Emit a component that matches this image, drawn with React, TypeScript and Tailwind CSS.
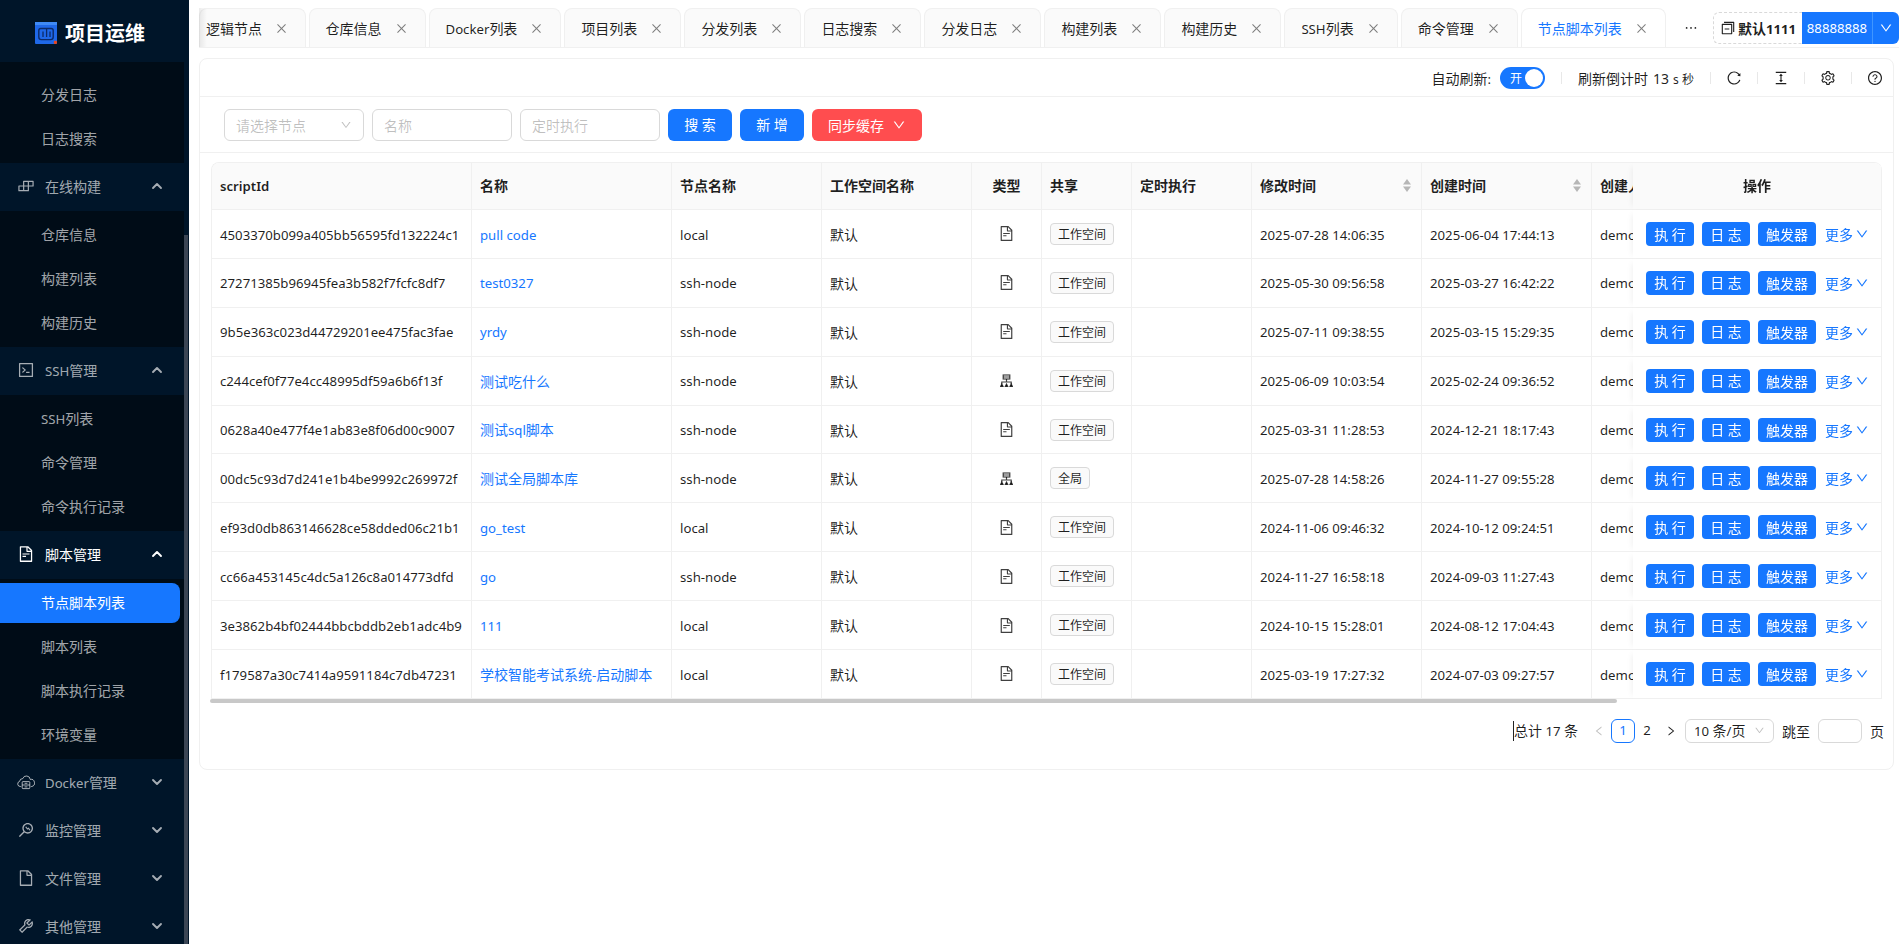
import React from "react";
import {
  AiOutlineBuild, AiOutlineCode, AiOutlineFileText, AiOutlineFile, AiOutlineTool, AiOutlineMonitor,
  AiOutlineClose, AiOutlineEllipsis, AiOutlineSwitcher, AiOutlineDown, AiOutlineReload, AiOutlineColumnHeight,
  AiOutlineSetting, AiOutlineQuestionCircle, AiOutlineLeft, AiOutlineRight,
} from "react-icons/ai";
import { ChevronDown, ChevronUp } from "lucide-react";

/* Latin runs are set in Noto Sans 13.2px, CJK runs stay at the surrounding size */
const M = ({ t }: { t: string }) => (
  <>
    {t.split(/([\x00-\x7f]+)/).filter(Boolean).map((p, i) =>
      /^[\x00-\x7f]+$/.test(p)
        ? <span key={i} className="font-['Noto_Sans'] text-[13.2px] whitespace-pre">{p}</span>
        : <span key={i}>{p}</span>
    )}
  </>
);

const DockerIcon = () => (
  <svg viewBox="0 0 18 16" className="w-[18px] h-[16px]" fill="none" stroke="currentColor" strokeWidth="1">
    <path d="M4.2 12.5H3.4A2.6 2.6 0 0 1 2.6 7.4 3.2 3.2 0 0 1 5.8 4.6 3.8 3.8 0 0 1 13.2 5.4 3.6 3.6 0 0 1 14.6 12.5H13.8" />
    <rect x="5.2" y="7.6" width="7.6" height="7" rx="0.8" />
    <path d="M5.2 11h7.6M7.6 9.3h2.8M7.6 12.9h2.8" />
  </svg>
);

const ClusterIcon = () => (
  <svg viewBox="0 0 13 13" className="w-[13px] h-[13px]" fill="none" stroke="currentColor" strokeWidth="1.2">
    <rect x="3.2" y="1" width="6.6" height="4" />
    <path d="M3.2 3h6.6M6.5 5v3M1.8 10V8h9.4v2" />
    <path d="M0.6 12.4l1.2-2.4 1.2 2.4zM5.3 12.4l1.2-2.4 1.2 2.4zM10 12.4l1.2-2.4 1.2 2.4z" fill="currentColor" />
  </svg>
);

const SortIcon = () => (
  <svg viewBox="0 0 8 13" className="w-[8px] h-[13px]" fill="rgba(0,0,0,0.27)">
    <path d="M4 0L8 5.5H0zM4 13L0 7.5H8z" />
  </svg>
);

const Logo = () => (
  <svg viewBox="0 0 22 22" className="w-[22px] h-[22px]">
    <rect x="0" y="0" width="22" height="22" rx="1" fill="#1f68e8" />
    <rect x="0" y="0" width="22" height="3" fill="#3f8af5" />
    <path d="M3.8 15V8.5a2 2 0 0 1 2-2h10.4a2 2 0 0 1 2 2V15a2.6 2.6 0 0 1-2.6 2.6H6.4A2.6 2.6 0 0 1 3.8 15z" fill="none" stroke="#0c2a68" strokeWidth="1.4" />
    <path d="M8 15V9.5M11.6 15V7M15 15V9.5" fill="none" stroke="#0c2a68" strokeWidth="1.3" />
    <rect x="18.8" y="18.8" width="3.2" height="3.2" rx="1.2" fill="#e8471f" />
  </svg>
);

const SubItem = ({ label, active }: { label: string; active?: boolean }) => (
  <div className={active
    ? "h-10 w-[180px] flex items-center pl-[41px] pb-[2px] rounded-r-lg bg-[#1677ff] text-white"
    : "h-10 flex items-center pl-[41px] pb-[2px] text-[rgba(255,255,255,0.65)]"}>
    <span><M t={label} /></span>
  </div>
);

const Group = ({ icon, label, open, active }: { icon: React.ReactNode; label: string; open?: boolean; active?: boolean }) => (
  <div className={active
    ? "h-12 shrink-0 flex items-center pl-[17px] pr-[19px] pb-[2px] text-white"
    : "h-12 shrink-0 flex items-center pl-[17px] pr-[19px] pb-[2px] text-[rgba(255,255,255,0.65)]"}>
    <span className="w-[18px] flex justify-center text-[20px]">{icon}</span>
    <span className="ml-[10px] flex-1"><M t={label} /></span>
    {open ? <ChevronUp size={16} strokeWidth={2.8} /> : <ChevronDown size={16} strokeWidth={2.8} />}
  </div>
);

const Sub = ({ first, children }: { first?: boolean; children: React.ReactNode }) => (
  <div className={first ? "bg-[#000c17] pt-[13px] pb-1 flex flex-col gap-1" : "bg-[#000c17] py-1 flex flex-col gap-1"}>{children}</div>
);

const Sidebar = () => (
  <aside className="w-[189px] shrink-0 h-screen bg-[#001529] flex flex-col overflow-hidden text-sm">
    <div className="h-[62px] shrink-0 flex items-center pl-[35px] pt-[4px]">
      <Logo />
      <span className="ml-[8px] text-[20px] font-bold text-white">项目运维</span>
    </div>
    <div className="flex-1 flex min-h-0">
      <div className="w-[184px] overflow-hidden">
        <Sub first><SubItem label="分发日志" /><SubItem label="日志搜索" /></Sub>
        <Group icon={<AiOutlineBuild />} label="在线构建" open />
        <Sub><SubItem label="仓库信息" /><SubItem label="构建列表" /><SubItem label="构建历史" /></Sub>
        <Group icon={<AiOutlineCode />} label="SSH管理" open />
        <Sub><SubItem label="SSH列表" /><SubItem label="命令管理" /><SubItem label="命令执行记录" /></Sub>
        <Group icon={<AiOutlineFileText />} label="脚本管理" open active />
        <Sub><SubItem label="节点脚本列表" active /><SubItem label="脚本列表" /><SubItem label="脚本执行记录" /><SubItem label="环境变量" /></Sub>
        <Group icon={<DockerIcon />} label="Docker管理" />
        <Group icon={<AiOutlineMonitor />} label="监控管理" />
        <Group icon={<AiOutlineFile />} label="文件管理" />
        <Group icon={<AiOutlineTool />} label="其他管理" />
      </div>
      <div className="w-[5px] pt-[173px]"><div className="w-[4px] h-full bg-[#3b4554]" /></div>
    </div>
  </aside>
);

const Tab = ({ label, active, first }: { label: string; active?: boolean; first?: boolean }) => (
  <div className={
    (active
      ? "h-10 shrink-0 flex items-center rounded-t-lg border border-[#f0f0f0] border-b-white bg-white text-[#1677ff] mr-[3px]"
      : "h-10 shrink-0 flex items-center rounded-t-lg border border-[#f0f0f0] border-b-[#e4e4e4] bg-[#fafafa] text-[rgba(0,0,0,0.88)] mr-[3px]") +
    (first ? " pl-[6px] pr-[16.5px]" : " pl-[16px] pr-[17px]")}>
    <span><M t={label} /></span>
    <AiOutlineClose className="ml-[13px] text-[13px] text-[rgba(0,0,0,0.5)]" />
  </div>
);

const TabBar = () => (
  <div className="mt-2 ml-[10px] mr-[3px] flex h-10 border-b border-[#f0f0f0] shrink-0">
    <div className="relative w-[1470px] flex overflow-hidden shrink-0">
      <Tab first label="逻辑节点" />
      {["仓库信息", "Docker列表", "项目列表", "分发列表", "日志搜索", "分发日志", "构建列表", "构建历史", "SSH列表", "命令管理"].map((t) => <Tab key={t} label={t} />)}
      <Tab active label="节点脚本列表" />
      <div className="absolute left-0 top-0 bottom-0 w-[8px] bg-gradient-to-r from-[rgba(0,0,0,0.08)] to-transparent" />
    </div>
    <div className="w-[44px] h-[39px] flex items-center justify-center"><AiOutlineEllipsis className="text-[16px] text-[rgba(0,0,0,0.88)]" /></div>
    <div className="mt-[4px] h-8 flex">
      <div className="w-[89px] flex items-center justify-center border border-dashed border-[#d9d9d9] border-r-0 rounded-l-md font-bold text-[rgba(0,0,0,0.88)]">
        <AiOutlineSwitcher className="text-[16px] mr-[2px]" /><span><M t="默认1111" /></span>
      </div>
      <div className="w-[71px] flex items-center justify-center bg-[#1677ff] text-white border-r border-[#4096ff]"><M t="88888888" /></div>
      <div className="w-[26px] flex items-center justify-center bg-[#1677ff] text-white rounded-r-md"><AiOutlineDown className="text-[14px]" /></div>
    </div>
  </div>
);

const Sep = () => <span className="block w-px h-[12px] bg-[#e8e8e8]" />;

const Toolbar = () => (
  <div className="h-[38px] shrink-0 border-b border-[#f0f0f0] flex items-center justify-end pr-[10px] pt-px text-[rgba(0,0,0,0.88)]">
    <span><M t="自动刷新:" /></span>
    <span className="ml-[9px] w-[45px] h-[22px] rounded-full bg-[#1677ff] flex items-center justify-between pl-[10px] pr-[2px] text-white text-xs">
      开<span className="w-[18px] h-[18px] rounded-full bg-white" />
    </span>
    <span className="ml-[16px]"><Sep /></span>
    <span className="ml-[16px] flex items-baseline">
      <span>刷新倒计时</span>
      <span className="ml-[5px] font-['Noto_Sans'] text-[14px]">13</span>
      <span className="ml-[4px] text-xs"><span className="font-['Noto_Sans'] text-xs whitespace-pre">s </span>秒</span>
    </span>
    <span className="ml-[16px]"><Sep /></span>
    <AiOutlineReload className="ml-[15px] text-[16px]" />
    <span className="ml-[15px]"><Sep /></span>
    <AiOutlineColumnHeight className="ml-[15px] text-[16px]" />
    <span className="ml-[15px]"><Sep /></span>
    <AiOutlineSetting className="ml-[15px] text-[16px]" />
    <span className="ml-[15px]"><Sep /></span>
    <AiOutlineQuestionCircle className="ml-[15px] text-[16px]" />
  </div>
);

const inputCls = "w-[140px] h-8 rounded-md border border-[#d9d9d9] bg-white flex items-center px-[11px] text-[rgba(0,0,0,0.25)]";

const Filters = () => (
  <div className="h-[56px] shrink-0 border-b border-[#f0f0f0] flex items-center pl-[24px]">
    <div className={inputCls + " justify-between"}>请选择节点<AiOutlineDown className="text-[12px]" /></div>
    <div className={inputCls + " ml-2"}>名称</div>
    <div className={inputCls + " ml-2"}>定时执行</div>
    <div className="ml-2 w-16 h-8 rounded-md bg-[#1677ff] text-white flex items-center justify-center"><span><M t="搜 索" /></span></div>
    <div className="ml-2 w-16 h-8 rounded-md bg-[#1677ff] text-white flex items-center justify-center"><span><M t="新 增" /></span></div>
    <div className="ml-2 w-[110px] h-8 rounded-md bg-[#ff4d4f] text-white flex items-center justify-center">同步缓存<AiOutlineDown className="text-[14px] ml-[8px]" /></div>
  </div>
);

type Row = { id: string; name: string; node: string; cluster?: boolean; global?: boolean; mod: string; created: string };
const rows: Row[] = [
  { id: "4503370b099a405bb56595fd132224c1", name: "pull code", node: "local", mod: "2025-07-28 14:06:35", created: "2025-06-04 17:44:13" },
  { id: "27271385b96945fea3b582f7fcfc8df7", name: "test0327", node: "ssh-node", mod: "2025-05-30 09:56:58", created: "2025-03-27 16:42:22" },
  { id: "9b5e363c023d44729201ee475fac3fae", name: "yrdy", node: "ssh-node", mod: "2025-07-11 09:38:55", created: "2025-03-15 15:29:35" },
  { id: "c244cef0f77e4cc48995df59a6b6f13f", name: "测试吃什么", node: "ssh-node", cluster: true, mod: "2025-06-09 10:03:54", created: "2025-02-24 09:36:52" },
  { id: "0628a40e477f4e1ab83e8f06d00c9007", name: "测试sql脚本", node: "ssh-node", mod: "2025-03-31 11:28:53", created: "2024-12-21 18:17:43" },
  { id: "00dc5c93d7d241e1b4be9992c269972f", name: "测试全局脚本库", node: "ssh-node", cluster: true, global: true, mod: "2025-07-28 14:58:26", created: "2024-11-27 09:55:28" },
  { id: "ef93d0db863146628ce58dded06c21b1", name: "go_test", node: "local", mod: "2024-11-06 09:46:32", created: "2024-10-12 09:24:51" },
  { id: "cc66a453145c4dc5a126c8a014773dfd", name: "go", node: "ssh-node", mod: "2024-11-27 16:58:18", created: "2024-09-03 11:27:43" },
  { id: "3e3862b4bf02444bbcbddb2eb1adc4b9", name: "111", node: "local", mod: "2024-10-15 15:28:01", created: "2024-08-12 17:04:43" },
  { id: "f179587a30c7414a9591184c7db47231", name: "学校智能考试系统-启动脚本", node: "local", mod: "2025-03-19 17:27:32", created: "2024-07-03 09:27:57" },
];

const thBase = "h-[47px] px-2 pb-[2px] bg-[#fafafa] border-b border-r border-[#f0f0f0] font-semibold text-[rgba(0,0,0,0.88)] whitespace-nowrap overflow-hidden";
const th = thBase + " text-left";
const thC = thBase + " text-center";
const tdBase = "h-[48.9px] border-b border-r border-[#f0f0f0] whitespace-nowrap overflow-hidden";
const td = tdBase + " px-2 text-[rgba(0,0,0,0.88)]";
const tdLink = tdBase + " px-2 text-[#1677ff]";
const tdOp = tdBase + " px-0 sticky right-0 bg-white shadow-[-5px_0_6px_-4px_rgba(0,0,0,0.06)]";

const Sorter = ({ label }: { label: string }) => (
  <div className="flex items-center justify-between pr-[2px]">
    {label}
    <SortIcon />
  </div>
);

const Btn = ({ w, children }: { w: string; children: string }) => (
  <span className={w + " h-6 rounded bg-[#1677ff] text-white flex items-center justify-center"}><span><M t={children} /></span></span>
);

const Table = () => (
  <div className="mx-[11px] mt-[9px] border-t border-l border-[#f0f0f0] rounded-t-lg overflow-hidden">
    <table className="table-fixed border-separate border-spacing-0 w-[1749px]">
      <thead>
        <tr>
          <th className={th + " w-[260px]"}><M t="scriptId" /></th>
          <th className={th + " w-[200px]"}>名称</th>
          <th className={th + " w-[150px]"}>节点名称</th>
          <th className={th + " w-[150px]"}>工作空间名称</th>
          <th className={thC + " w-[70px]"}>类型</th>
          <th className={th + " w-[90px]"}>共享</th>
          <th className={th + " w-[120px]"}>定时执行</th>
          <th className={th + " w-[170px]"}><Sorter label="修改时间" /></th>
          <th className={th + " w-[170px]"}><Sorter label="创建时间" /></th>
          <th className={th + " w-[120px]"}>创建人</th>
          <th className={thC + " w-[249px] sticky right-0 shadow-[-5px_0_6px_-4px_rgba(0,0,0,0.06)]"}>操作</th>
        </tr>
      </thead>
      <tbody>
        {rows.map((r) => (
          <tr key={r.id}>
            <td className={td}><M t={r.id} /></td>
            <td className={tdLink}><M t={r.name} /></td>
            <td className={td}><M t={r.node} /></td>
            <td className={td}>默认</td>
            <td className={td}><div className="flex justify-center text-[17px] text-[rgba(0,0,0,0.75)]">{r.cluster ? <ClusterIcon /> : <AiOutlineFileText />}</div></td>
            <td className={td}>
              <span className="inline-flex items-center h-[22px] px-[7px] rounded border border-[#d9d9d9] bg-[#fafafa] text-xs">{r.global ? "全局" : "工作空间"}</span>
            </td>
            <td className={td}></td>
            <td className={td}><M t={r.mod} /></td>
            <td className={td}><M t={r.created} /></td>
            <td className={td}><M t="demo" /></td>
            <td className={tdOp}>
              <div className="flex items-center pl-[13px]">
                <Btn w="w-12">执 行</Btn>
                <span className="ml-2"><Btn w="w-12">日 志</Btn></span>
                <span className="ml-2"><Btn w="w-[58px]">触发器</Btn></span>
                <span className="ml-[9px] text-[#1677ff] flex items-center">更多<AiOutlineDown className="ml-[2px] text-[14px]" /></span>
              </div>
            </td>
          </tr>
        ))}
      </tbody>
    </table>
  </div>
);

const Pager = () => (
  <div className="h-6 mt-[16px] flex items-center justify-end pr-[9px] text-[rgba(0,0,0,0.88)]">
    <span className="w-px h-5 bg-[#222]" />
    <span><M t="总计 17 条" /></span>
    <span className="ml-[9px] w-6 h-6 flex items-center justify-center"><AiOutlineLeft className="text-[12px] text-[rgba(0,0,0,0.25)]" /></span>
    <span className="w-6 h-6 rounded-md border border-[#1677ff] text-[#1677ff] flex items-center justify-center"><M t="1" /></span>
    <span className="w-6 h-6 flex items-center justify-center"><M t="2" /></span>
    <span className="w-6 h-6 flex items-center justify-center"><AiOutlineRight className="text-[12px]" /></span>
    <span className="ml-[2px] w-[89px] h-6 rounded-md border border-[#d9d9d9] flex items-center justify-between px-2"><span><M t="10 条/页" /></span><AiOutlineDown className="text-[11px] text-[rgba(0,0,0,0.25)]" /></span>
    <span className="ml-2">跳至</span>
    <span className="ml-2 w-[44px] h-6 rounded-md border border-[#d9d9d9]" />
    <span className="ml-2">页</span>
  </div>
);

export default function App() {
  return (
    <div className="flex h-screen w-full overflow-hidden bg-white text-sm font-['Noto_Sans_CJK_SC','Noto_Sans',sans-serif]">
      <Sidebar />
      <main className="flex-1 min-w-0 flex flex-col">
        <TabBar />
        <section className="mt-[10px] ml-[10px] mr-[8px] h-[712px] rounded-lg border border-[#f0f0f0] flex flex-col">
          <Toolbar />
          <Filters />
          <Table />
          <div className="ml-[10px] w-[1407px] h-[4px] rounded-full bg-[#c8c8c8]" />
          <Pager />
        </section>
      </main>
    </div>
  );
}
